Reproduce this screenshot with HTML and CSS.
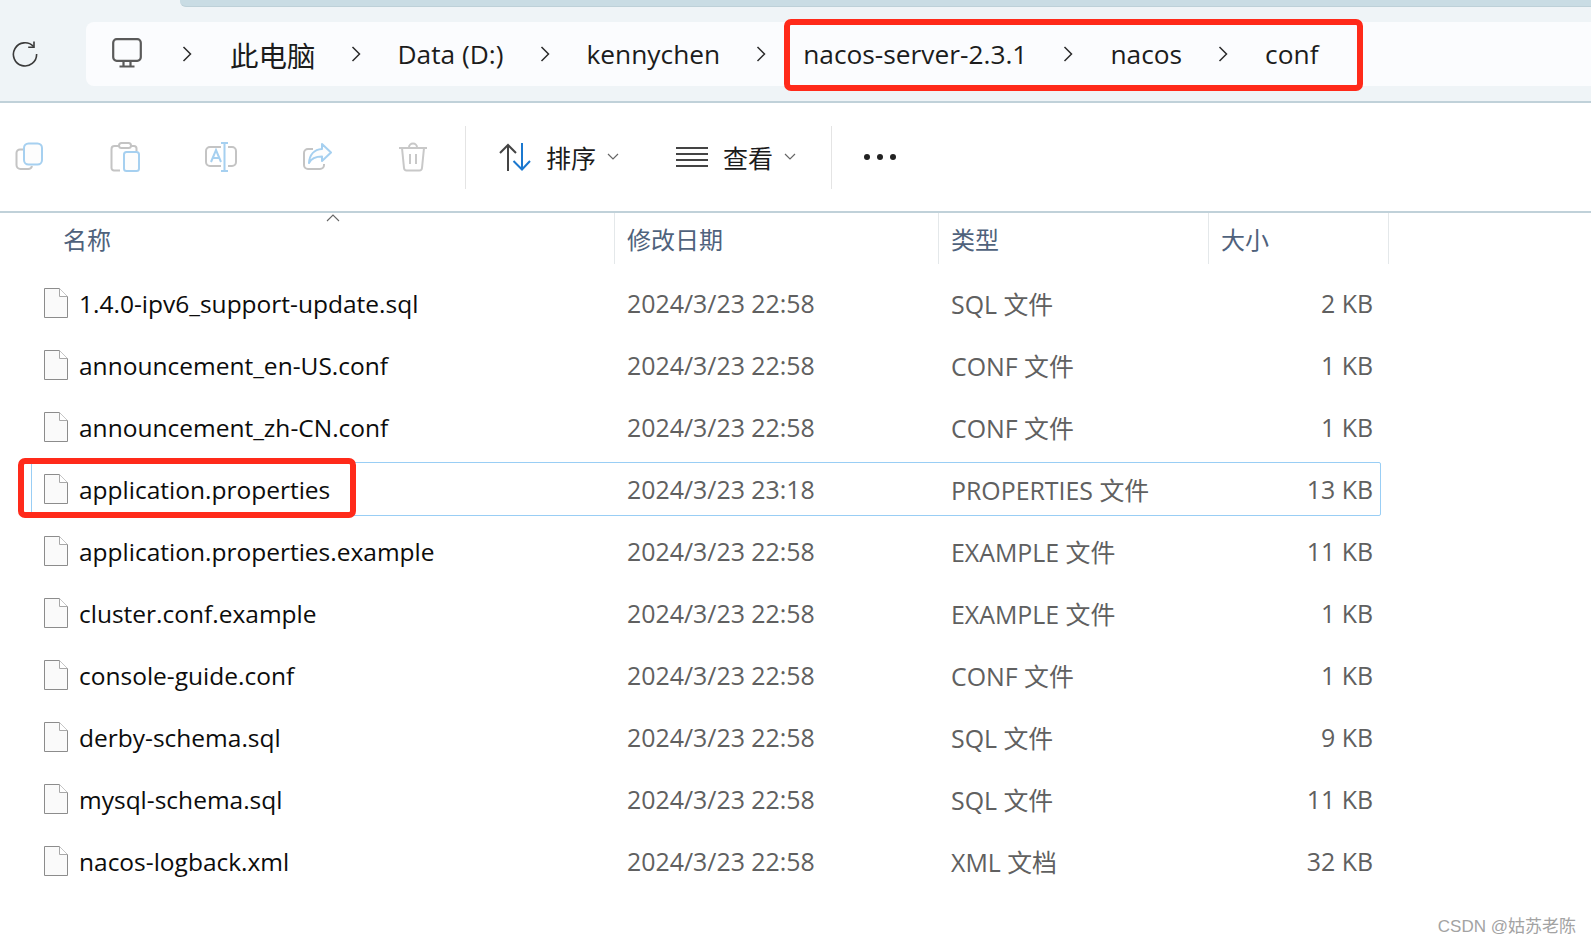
FILE: index.html
```html
<!DOCTYPE html>
<html lang="zh-CN">
<head>
<meta charset="utf-8">
<title>conf</title>
<link rel="stylesheet" href="styles.css">
</head>
<body>
<svg class="defs" width="0" height="0" aria-hidden="true">
  <defs>
    <symbol id="doc" viewBox="0 0 24 30">
      <path d="M.5.5H15.5L23.5 8.5V29.5H.5Z" fill="#fafafa" stroke="#8c8c8c"/>
      <path d="M15.5.5V8.5H23.5" fill="#fff" stroke="#a8a8a8"/>
    </symbol>
    <symbol id="chev" viewBox="0 0 10 16">
      <path d="M1.5 1L8.5 8L1.5 15" fill="none" stroke="#2b2b2b" stroke-width="1.5"/>
    </symbol>
    <symbol id="caret" viewBox="0 0 12 7">
      <path d="M1 1L6 6L11 1" fill="none" stroke="#666" stroke-width="1.2"/>
    </symbol>
  </defs>
</svg>
<div class="page">
  <header class="top">
    <div class="tab"></div>
    <div class="nav">
      <svg class="refresh" viewBox="0 0 26 26" fill="none" stroke="#3a3a3a" stroke-width="1.6">
        <path d="M21.5 5.5A11.6 11.6 0 1 0 24.6 13"/>
        <path d="M22 .5V6.3H16.2"/>
      </svg>
      <nav class="crumbs">
        <svg class="pc" viewBox="0 0 30 30" fill="none" stroke="#5a5a5a" stroke-width="2.2">
          <rect x="1.2" y="1.2" width="27.6" height="21.6" rx="3.5"/>
          <path d="M11.5 23V28M18.5 23V28"/>
          <path d="M7.5 28.5H22.5" stroke-width="2"/>
        </svg>
        <svg class="chev"><use href="#chev"/></svg>
        <span class="crumb-cjk">此电脑</span>
        <svg class="chev"><use href="#chev"/></svg>
        <span>Data (D:)</span>
        <svg class="chev"><use href="#chev"/></svg>
        <span>kennychen</span>
        <svg class="chev"><use href="#chev"/></svg>
        <span>nacos-server-2.3.1</span>
        <svg class="chev"><use href="#chev"/></svg>
        <span>nacos</span>
        <svg class="chev"><use href="#chev"/></svg>
        <span>conf</span>
        <div class="mark mark-path"></div>
      </nav>
    </div>
  </header>

  <section class="toolbar">
    <svg class="tool" viewBox="0 0 30 30" fill="none" stroke-width="2">
      <path d="M8 7.5H5A3.500 3.500 0 0 0 1.500 11V23A4 4 0 0 0 5.500 27H13A4 4 0 0 0 17 24" stroke="#c4c4c4"/>
      <rect x="9" y="1.500" width="18" height="21" rx="4.500" fill="#fdfdfd" stroke="#a6d0f0"/>
    </svg>
    <svg class="tool" viewBox="0 0 30 30" fill="none" stroke-width="2">
      <path d="M9 4H4.500A3 3 0 0 0 1.500 7V26A2.500 2.500 0 0 0 4 28.500H10M21 4H24A2.500 2.500 0 0 1 26.500 6.500V9" stroke="#c4c4c4"/>
      <rect x="9" y="1" width="12" height="5" rx="2.500" stroke="#c4c4c4"/>
      <rect x="14" y="10" width="15" height="19" rx="2.500" fill="#fdfdfd" stroke="#a6d0f0"/>
    </svg>
    <svg class="tool tool-wide" viewBox="0 0 32 30" fill="none" stroke-width="2">
      <path d="M16 5H5A4 4 0 0 0 1 9V20A4 4 0 0 0 5 24H16M23 5H27A4 4 0 0 1 31 9V20A4 4 0 0 1 27 24H23" stroke="#c4c4c4"/>
      <path d="M19.500 1V29M16 1H23M16 29H23M6 20L11 8L16 20M8 16H14" stroke="#a6d0f0"/>
    </svg>
    <svg class="tool" viewBox="0 0 30 30" fill="none" stroke-width="2">
      <path d="M11 7H6A4 4 0 0 0 2 11V23A4 4 0 0 0 6 27H18A4 4 0 0 0 22 23V22" stroke="#c4c4c4"/>
      <path d="M20 2L29 10.500L20 19V14.500C14 14.500 9.500 16 7 21C7.500 13 12 7.500 20 7Z" fill="#fdfdfd" stroke="#a6d0f0" stroke-linejoin="round"/>
    </svg>
    <svg class="tool tool-trash" viewBox="0 0 30 30" fill="none" stroke="#c8c8c8" stroke-width="2">
      <path d="M1 6H29M11 5.500A4 4 0 0 1 19 5.500M4 6L6 26A2.800 2.800 0 0 0 9 28.500H21A2.800 2.800 0 0 0 24 26L26 6M12 12V22M18 12V22"/>
    </svg>
    <div class="sep sep-a"></div>
    <button class="tbtn tbtn-sort">
      <svg class="sort" viewBox="0 0 33 30" fill="none" stroke-width="2">
        <path d="M10 29V3M2 11L10 3L18 11" stroke="#444"/>
        <path d="M24 1V27M15.500 19L24 27.500L32 19" stroke="#1b78cf"/>
      </svg>
      <span>排序</span>
      <svg class="caret"><use href="#caret"/></svg>
    </button>
    <button class="tbtn tbtn-view">
      <svg class="lines" viewBox="0 0 32 22" fill="none" stroke="#444" stroke-width="2">
        <path d="M0 2H32M0 8H32M0 14H32M0 20H32"/>
      </svg>
      <span>查看</span>
      <svg class="caret"><use href="#caret"/></svg>
    </button>
    <div class="sep sep-b"></div>
    <div class="dots"><i></i><i></i><i></i></div>
  </section>

  <main class="files">
    <div class="thead">
      <div class="th th-name">名称<svg class="up" viewBox="0 0 14 8"><path d="M1 7L7 1L13 7" fill="none" stroke="#666" stroke-width="1.100"/></svg></div>
      <div class="th th-date">修改日期</div>
      <div class="th th-type">类型</div>
      <div class="th th-size">大小</div>
    </div>
    <div class="rows">
      <div class="row"><div class="name"><svg class="doc"><use href="#doc"/></svg>1.4.0-ipv6_support-update.sql</div><div>2024/3/23 22:58</div><div>SQL 文件</div><div class="size">2 KB</div></div>
      <div class="row"><div class="name"><svg class="doc"><use href="#doc"/></svg>announcement_en-US.conf</div><div>2024/3/23 22:58</div><div>CONF 文件</div><div class="size">1 KB</div></div>
      <div class="row"><div class="name"><svg class="doc"><use href="#doc"/></svg>announcement_zh-CN.conf</div><div>2024/3/23 22:58</div><div>CONF 文件</div><div class="size">1 KB</div></div>
      <div class="row row-focus"><div class="name"><svg class="doc"><use href="#doc"/></svg>application.properties</div><div>2024/3/23 23:18</div><div>PROPERTIES 文件</div><div class="size">13 KB</div><div class="mark mark-file"></div></div>
      <div class="row"><div class="name"><svg class="doc"><use href="#doc"/></svg>application.properties.example</div><div>2024/3/23 22:58</div><div>EXAMPLE 文件</div><div class="size">11 KB</div></div>
      <div class="row"><div class="name"><svg class="doc"><use href="#doc"/></svg>cluster.conf.example</div><div>2024/3/23 22:58</div><div>EXAMPLE 文件</div><div class="size">1 KB</div></div>
      <div class="row"><div class="name"><svg class="doc"><use href="#doc"/></svg>console-guide.conf</div><div>2024/3/23 22:58</div><div>CONF 文件</div><div class="size">1 KB</div></div>
      <div class="row"><div class="name"><svg class="doc"><use href="#doc"/></svg>derby-schema.sql</div><div>2024/3/23 22:58</div><div>SQL 文件</div><div class="size">9 KB</div></div>
      <div class="row"><div class="name"><svg class="doc"><use href="#doc"/></svg>mysql-schema.sql</div><div>2024/3/23 22:58</div><div>SQL 文件</div><div class="size">11 KB</div></div>
      <div class="row"><div class="name"><svg class="doc"><use href="#doc"/></svg>nacos-logback.xml</div><div>2024/3/23 22:58</div><div>XML 文档</div><div class="size">32 KB</div></div>
    </div>
  </main>
  <div class="watermark">CSDN @姑苏老陈</div>
</div>
</body>
</html>
```
FILE: styles.css
```css
* { box-sizing: border-box; }
html, body { margin: 0; height: 100%; background: #fff; overflow: hidden; }
body { font-family: "Open Sans", "Noto Sans CJK SC", sans-serif; }
.defs { position: absolute; }
.page { position: relative; width: 1591px; height: 944px; overflow: hidden; }

.top { height: 103px; background: #eff4f7; border-bottom: 2px solid #c0d1d9; }
.tab { height: 7px; margin-left: 180px; background: #c9dce4; border-bottom: 1px solid #bdd0d8; border-bottom-left-radius: 6px; }
.nav { display: flex; align-items: center; height: 64px; margin-top: 15px; padding-left: 12px; }
.refresh { width: 26px; height: 26px; flex: none; margin-right: 48px; }
.crumbs { position: relative; flex: 1; height: 64px; display: flex; align-items: center; gap: 36px; padding-left: 26px; background: #fbfcfe; border-radius: 8px 0 0 8px; font-size: 26.3px; color: #1c1c1c; white-space: nowrap; }
.pc { width: 30px; height: 30px; flex: none; margin-top: -2px; margin-right: 4px; }
.chev { width: 10px; height: 16px; flex: none; margin-right: 1px; }
.crumb-cjk { font-size: 28.5px; margin-left: 1px; margin-right: -1px; }

.mark { position: absolute; border: 6px solid #ff2a1a; border-radius: 7px; pointer-events: none; }
.mark-path { left: 698px; top: -3px; width: 579px; height: 72px; }

.toolbar { display: flex; align-items: center; height: 110px; padding-left: 15px; gap: 65px; border-bottom: 2px solid #c0d1d9; }
.tool { width: 30px; height: 30px; flex: none; }
.tool-wide { width: 32px; }
.tool-trash { margin-left: 1px; }
.sep { width: 1px; height: 63px; background: #e4e4e4; flex: none; }
.sep-a { margin-left: -28px; margin-right: -33px; }
.sep-b { margin-left: -30px; margin-right: -33px; }
.tbtn { display: flex; align-items: center; border: 0; padding: 0; background: none; font: inherit; font-size: 25px; color: #1c1c1c; flex: none; }
.tbtn-view { margin-left: -8px; }
.sort { width: 33px; height: 30px; margin-right: 15px; }
.lines { width: 32px; height: 22px; margin-right: 15px; }
.caret { width: 12px; height: 7px; margin-left: 11px; margin-top: -2px; }
.dots { display: flex; gap: 7px; flex: none; }
.dots i { width: 6px; height: 6px; border-radius: 50%; background: #222; }

.files { font-size: 24.9px; color: #606060; }
.thead { display: grid; grid-template-columns: 615px 324px 270px 180px; width: 1389px; height: 51px; color: #4f627c; font-size: 24px; }
.th { position: relative; display: flex; align-items: center; padding-left: 12px; border-right: 1px solid #e4e8ea; }
.th-name { padding-left: 63px; }
.up { position: absolute; left: 326px; top: 1px; width: 14px; height: 8px; }

.rows { display: flex; flex-direction: column; gap: 8px; margin: 12px 0 0 31px; width: 1350px; }
.row { position: relative; display: grid; grid-template-columns: 595px 324px 1fr 150px; align-items: center; height: 54px; padding-right: 7px; border: 1px solid transparent; border-radius: 2px; white-space: nowrap; }
.row-focus { border-color: #99cef5; }
.name { display: flex; align-items: center; gap: 11px; padding-left: 12px; color: #0c0c0c; font-size: 24.5px; }
.doc { width: 24px; height: 30px; flex: none; }
.size { text-align: right; }
.mark-file { left: -14px; top: -5px; width: 338px; height: 60px; }

.watermark { position: absolute; right: 15px; bottom: 7px; font-family: "Liberation Sans", "Noto Sans CJK SC", sans-serif; font-size: 17px; color: #a3a3a3; }
```
